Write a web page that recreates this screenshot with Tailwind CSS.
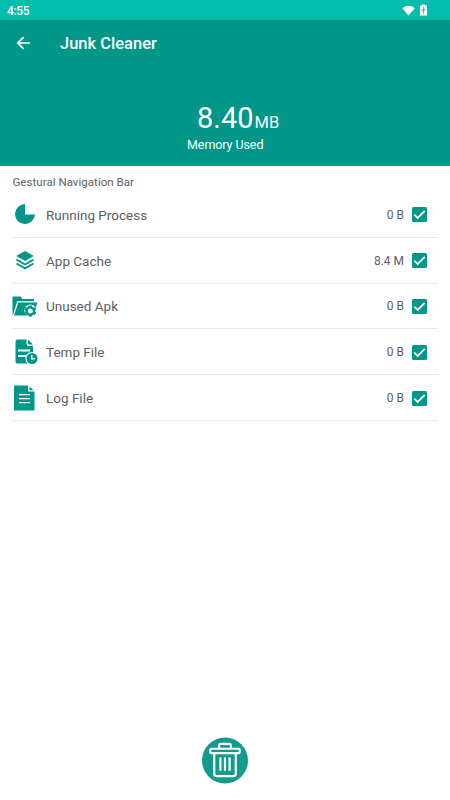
<!DOCTYPE html>
<html lang="en">
<head>
<meta charset="utf-8">
<title>Junk Cleaner</title>
<script src="https://cdn.jsdelivr.net/npm/@tailwindcss/browser@4"></script>
</head>
<body class="w-[450px] h-[800px] overflow-hidden bg-white font-[Roboto,sans-serif] flex flex-col">
<div class="h-5 shrink-0 bg-[#04bdad] flex items-center justify-between pl-[7px] pr-[22px] text-white">
  <span class="text-[12px] leading-5 font-medium tracking-[-.35px] pt-px">4:55</span>
  <div class="flex items-center gap-[4px]">
    <svg class="w-[13px] h-[11px]" viewBox="0 0 13 11"><path fill="#fff" d="M.3 3.2C3.8-.1 9.2-.1 12.700 3.200L6.500 10.600z"/></svg>
    <svg class="w-[9px] h-[12px]" viewBox="0 0 9 12"><path fill="#fff" d="M3 .5h3v1h2v10H1v-10h2z"/><path d="M4.500 3v6.500M3 5v1.500l1.500 1M6 4.500V6L4.500 7" stroke="#04bdad" stroke-width=".8" fill="none"/></svg>
  </div>
</div>
<header class="h-[146px] shrink-0 bg-[#009688] text-white flex flex-col">
  <div class="h-12 flex items-center pl-[16px]">
    <svg class="w-[15px] h-[14px] -mt-[2px]" viewBox="0 0 15 14" fill="none" stroke="#fff" stroke-width="1.700"><path d="M14 7H2M7.600 1.200L1.800 7l5.800 5.800"/></svg>
    <h1 class="ml-[29px] text-[16.500px] font-medium leading-6">Junk Cleaner</h1>
  </div>
  <div class="mt-[32px] pl-[197px] h-[36px] flex items-baseline gap-[1px]">
    <span class="text-[29px] leading-[36px]">8.40</span><span class="text-[16.500px]">MB</span>
  </div>
  <div class="pl-[187px] text-[12.500px] leading-[18px] tracking-[-.08px]">Memory Used</div>
</header>
<main class="px-[12px] text-[#606060]">
  <h2 class="h-[26px] pt-[7px] pl-[.5px] text-[11.500px] leading-[18px] tracking-[.04px]">Gestural Navigation Bar</h2>
  <ul class="text-[13.500px]">
    <li class="h-[45.800px] border-b border-[#e9e9e9] flex items-center">
      <svg class="w-[26px] h-[26px] mr-[8px]" viewBox="0 0 26 26"><path fill="#009688" d="M13 3v10.500h10a10 10 0 1 1-10-10.500z"/></svg>
      <span class="flex-1 pt-px">Running Process</span><span class="text-[12px] mr-[8px] pt-px">0 B</span>
      <svg class="w-[15px] h-[15px] mr-[11px]" viewBox="0 0 15 15"><rect width="15" height="15" rx="1.500" fill="#009688"/><path d="M2.300 7.700l3.400 3.200 7-7" fill="none" stroke="#fff" stroke-width="1.800"/></svg>
    </li>
    <li class="h-[45.800px] border-b border-[#e9e9e9] flex items-center">
      <svg class="w-[26px] h-[26px] mr-[8px]" viewBox="0 0 26 26"><path fill="#009688" d="M13 4l8.800 5-8.800 5-8.800-5z"/><path d="M4.500 12.700l8.500 4.800 8.500-4.800M4.500 16.500l8.500 4.800 8.500-4.800" fill="none" stroke="#009688" stroke-width="1.900"/></svg>
      <span class="flex-1 pt-px">App Cache</span><span class="text-[12px] mr-[8px] pt-px">8.4 M</span>
      <svg class="w-[15px] h-[15px] mr-[11px]" viewBox="0 0 15 15"><rect width="15" height="15" rx="1.500" fill="#009688"/><path d="M2.300 7.700l3.400 3.200 7-7" fill="none" stroke="#fff" stroke-width="1.800"/></svg>
    </li>
    <li class="h-[45.800px] border-b border-[#e9e9e9] flex items-center">
      <svg class="w-[26px] h-[26px] mr-[8px]" viewBox="0 0 26 26"><path fill="#009688" d="M.5 3.500h8l2 2.500h11.500v2.300H5.200L1 22H.5zM6.300 9.500H25.500L21.300 22.500H2z"/><circle cx="18.300" cy="17.500" r="6" fill="#fff"/><path d="M16.800 12.500h3l.4 1.300 1.400.8 1.300-.4 1.300 2.400-1 1 0 1 1 1-1.300 2.400-1.300-.4-1.400.8-.4 1.100h-3l-.4-1.100-1.400-.8-1.300.4-1.300-2.400 1-1v-1l-1-1 1.300-2.400 1.300.4 1.400-.8z" fill="#009688"/><circle cx="18.300" cy="18" r="2.500" fill="#fff"/></svg>
      <span class="flex-1 pt-px">Unused Apk</span><span class="text-[12px] mr-[8px] pt-px">0 B</span>
      <svg class="w-[15px] h-[15px] mr-[11px] mt-px" viewBox="0 0 15 15"><rect width="15" height="15" rx="1.500" fill="#009688"/><path d="M2.300 7.700l3.400 3.200 7-7" fill="none" stroke="#fff" stroke-width="1.800"/></svg>
    </li>
    <li class="h-[45.800px] border-b border-[#e9e9e9] flex items-center">
      <svg class="w-[26px] h-[26px] mr-[8px]" viewBox="0 0 26 26"><path fill="#009688" d="M5.500.5h9V5q0 2 2 2h4.500v17.500H5.500q-2 0-2-2v-20q0-2 2-2zM16 .5l5 5h-4q-1 0-1-1z"/><path d="M6 11.500h12M6 17h8" stroke="#fff" stroke-width="2"/><circle cx="20" cy="19.500" r="6.600" fill="#fff"/><circle cx="20" cy="19.500" r="5.500" fill="#009688"/><path d="M19.800 16v3.800h3.200" fill="none" stroke="#fff" stroke-width="1.400"/></svg>
      <span class="flex-1 pt-px">Temp File</span><span class="text-[12px] mr-[8px] pt-px">0 B</span>
      <svg class="w-[15px] h-[15px] mr-[11px] mt-px" viewBox="0 0 15 15"><rect width="15" height="15" rx="1.500" fill="#009688"/><path d="M2.300 7.700l3.400 3.200 7-7" fill="none" stroke="#fff" stroke-width="1.800"/></svg>
    </li>
    <li class="h-[45.800px] border-b border-[#e9e9e9] flex items-center">
      <svg class="w-[26px] h-[26px] mr-[8px]" viewBox="0 0 26 26"><path fill="#009688" d="M2 .5h14v6h6.500v19H2zM17.500 1.500l4 3.700h-4z"/><path d="M7 9.700h11M7 13.700h11M7 17.700h11" stroke="#fff" stroke-width="1.200"/></svg>
      <span class="flex-1 pt-px">Log File</span><span class="text-[12px] mr-[8px] pt-px">0 B</span>
      <svg class="w-[15px] h-[15px] mr-[11px] mt-px" viewBox="0 0 15 15"><rect width="15" height="15" rx="1.500" fill="#009688"/><path d="M2.300 7.700l3.400 3.200 7-7" fill="none" stroke="#fff" stroke-width="1.800"/></svg>
    </li>
  </ul>
</main>
<button class="mt-auto mb-[16px] self-center" aria-label="Clean">
  <svg class="w-[46px] h-[47px] block" viewBox="0 0 47 47"><circle cx="23.500" cy="23.500" r="23.500" fill="#139b8d"/><g fill="none" stroke="#fff" stroke-width="2.200"><rect x="8.500" y="11.500" width="30" height="4.500" rx="1"/><path d="M17.500 11V8q0-1.500 1.500-1.500h9q1.500 0 1.500 1.500v3M12.500 16v21q0 2.500 2.500 2.500h17q2.500 0 2.500-2.500V16M18.800 20.500v13.500M23.500 20.500v13.500M28.200 20.500v13.500"/></g></svg>
</button>
</body>
</html>
